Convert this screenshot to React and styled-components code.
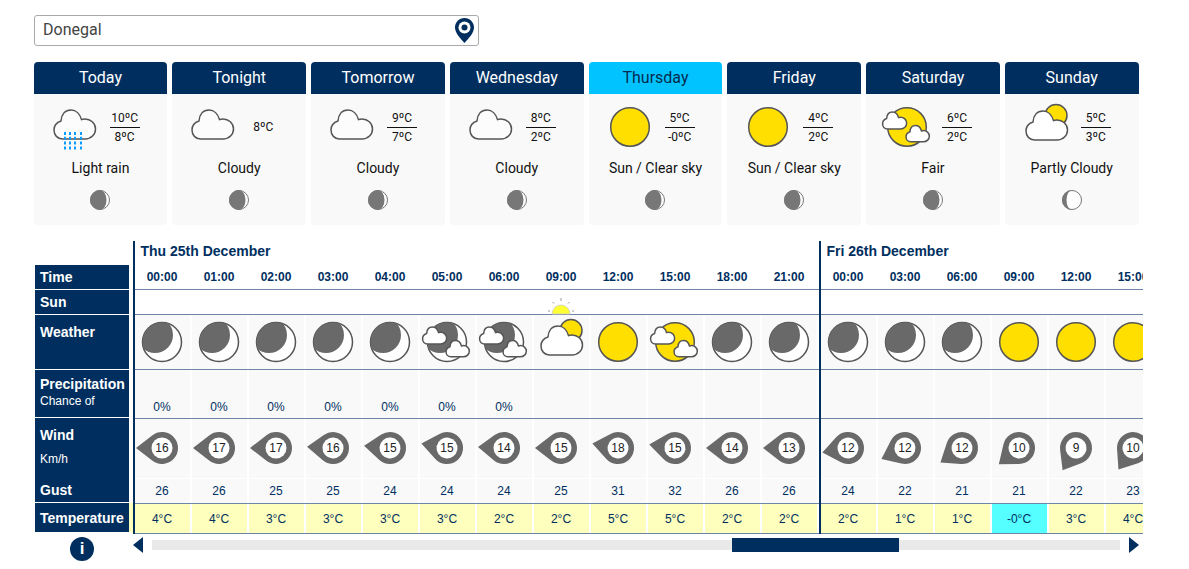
import React, { useId } from 'react';
import styled, { createGlobalStyle } from 'styled-components';

const NAVY = '#002f5f';
const LINE = '#6d86a8';
const STROKE = '#555';
const SUN = '#ffdf00';

const Global = createGlobalStyle`
  html, body { margin: 0; padding: 0; background: #fff; }
  * { box-sizing: border-box; }
`;

const Page = styled.div`
  width: 1189px;
  height: 569px;
  padding: 15px 0 0 34px;
  overflow: hidden;
  font-family: 'Liberation Sans', Arial, sans-serif;
`;

const Search = styled.div`
  width: 445px;
  height: 31px;
  border: 1px solid #aaa;
  border-radius: 3px;
  display: flex;
  align-items: center;
  justify-content: space-between;
  padding: 0 4px 2px 8px;
  font: 16px Roboto, sans-serif;
  color: #444;
`;

const SearchPin = styled.div`
  margin-bottom: -2px;
`;

const Days = styled.div`
  display: grid;
  grid-template-columns: repeat(8, 133.75px);
  column-gap: 5px;
  margin: 16px 0 0 -0.4px;
`;

const Card = styled.div`
  height: 163px;
  display: flex;
  flex-direction: column;
  background: #f9f9f9;
  border-radius: 4px;
  font-family: Roboto, sans-serif;
`;

const CardHead = styled.div`
  height: 32px;
  flex: none;
  display: flex;
  align-items: center;
  justify-content: center;
  padding-bottom: 2px;
  border-radius: 4px 4px 0 0;
  font-size: 16px;
  background: ${p => (p.$active ? '#00c3ff' : NAVY)};
  color: ${p => (p.$active ? '#062c4f' : '#fff')};
`;

const CardTop = styled.div`
  display: flex;
  align-items: center;
  height: 44px;
  margin-top: 11px;
  padding-left: 19px;
`;

const Temps = styled.div`
  width: 30px;
  margin-left: 13px;
  font-size: 12px;
  line-height: 18px;
  text-align: center;
  color: #111;
`;

const TempHigh = styled.div`
  border-bottom: 1px solid #111;
  height: 19px;
`;

const CardName = styled.div`
  margin-top: 10px;
  text-align: center;
  font-size: 14px;
  line-height: 18px;
  color: #111;
`;

const CardMoon = styled.div`
  margin-top: 13px;
  display: flex;
  justify-content: center;
`;

const Forecast = styled.div`
  display: flex;
  margin: 16px 0 0 1px;
`;

const Labels = styled.div`
  width: 98px;
  flex: none;
  padding-top: 24px;
`;

const Label = styled.div`
  height: ${p => p.$h}px;
  background: ${NAVY};
  background-clip: padding-box;
  border-right: 4px solid ${p => p.$tail || '#fff'};
  border-bottom: 1px solid #fff;
  padding: ${p => p.$pad ?? 0}px 0 0 5px;
  color: #fff;
  font-size: 14px;
  font-weight: 700;
  line-height: 16px;
`;

const LabelSub = styled.div`
  font-size: 12px;
  font-weight: 400;
  line-height: 14px;
  margin-top: ${p => p.$mt}px;
`;

const Gust = styled.div`
  margin-top: ${p => p.$mt}px;
`;

const Scroller = styled.div`
  width: 1010px;
  flex: none;
  overflow: hidden;
  display: flex;
`;

const DayBlock = styled.div`
  flex: none;
  border-left: 2px solid ${NAVY};
`;

const DateRow = styled.div`
  height: 24px;
  padding: 2px 0 0 5.5px;
  font-size: 14px;
  line-height: 16px;
  font-weight: 700;
  color: ${NAVY};
  white-space: nowrap;
`;

const Row = styled.div`
  display: flex;
  height: ${p => p.$h}px;
  border-bottom: ${p => (p.$plain ? '1px solid #fff' : `1px solid ${LINE}`)};
`;

const Cell = styled.div`
  width: 55px;
  margin-right: 2px;
  flex: none;
  display: flex;
  justify-content: center;
  align-items: ${p => p.$align || 'center'};
  padding: 0 1px ${p => p.$pb || 0}px 0;
  background: ${p => p.$bg || '#f9f9f9'};
  color: ${NAVY};
  font-size: 12px;
`;

const TimeCell = styled(Cell)`
  background: #fff;
  font-weight: 700;
`;

const SunCell = styled(Cell)`
  background: #fff;
  align-items: flex-end;
  overflow: visible;
`;

const Pin = styled.div`
  display: grid;
  place-items: center;
  width: 56px;
  height: 56px;
  flex: none;
  & > * { grid-area: 1 / 1; }
`;

const PinValue = styled.span`
  color: #222;
  font-size: 12px;
`;

const Foot = styled.div`
  display: flex;
  margin: 3px 0 0 1px;
`;

const InfoSlot = styled.div`
  width: 94px;
  flex: none;
  display: flex;
  justify-content: center;
`;

const Info = styled.div`
  width: 24px;
  height: 24px;
  border-radius: 50%;
  background: ${NAVY};
  color: #fff;
  font-size: 17px;
  font-weight: 700;
  line-height: 24px;
  text-align: center;
`;

const ScrollBar = styled.div`
  display: flex;
  align-items: flex-start;
  margin-left: 4px;
`;

const Track = styled.div`
  position: relative;
  width: 968px;
  height: 10px;
  margin: 3px 9px 0;
  background: #e9e9e9;
`;

const Thumb = styled.div`
  position: absolute;
  top: -2px;
  left: 580px;
  width: 167px;
  height: 14px;
  background: ${NAVY};
`;

const CLOUD = 'M9.5 30H32C38 30 42.5 25.5 42.5 20C42.5 14 37.5 10 32 10C30.5 10 29.5 10.2 28.5 10.6C27 5 23 1 18 1C12 1 8.5 5.5 8 12C3.5 13.5 1 17 1 21C1 26 4.5 30 9.5 30Z';

const Cloud = ({ x = 0, y = 0, s = 1, fill = '#fff', sw = 1.5 }) => (
  <path d={CLOUD} transform={`translate(${x} ${y}) scale(${s})`} fill={fill} stroke={STROKE} strokeWidth={sw} vectorEffect="non-scaling-stroke" strokeLinejoin="round" />
);

const Svg = styled.svg`
  display: block;
  flex: none;
  overflow: visible;
`;

const MoonDisc = () => {
  const id = useId();
  return (
    <>
      <clipPath id={id}><circle cx="22" cy="22" r="19.5" /></clipPath>
      <circle cx="22" cy="22" r="19.5" fill="#fff" stroke={STROKE} strokeWidth="1.5" />
      <circle cx="15" cy="15" r="18" fill="#696969" clipPath={`url(#${id})`} />
    </>
  );
};

const SunDisc = () => <circle cx="22" cy="22" r="19.3" fill={SUN} stroke={STROKE} strokeWidth="1.5" />;

const TwoClouds = () => (
  <>
    <Cloud x={-3} y={6.5} s={0.58} />
    <Cloud x={20.5} y={20} s={0.56} />
  </>
);

const WeatherIcon = ({ kind }) => (
  <Svg width="44" height="44" viewBox="0 0 44 44">
    {kind === 'moon' && <MoonDisc />}
    {kind === 'moonc' && <><MoonDisc /><TwoClouds /></>}
    {kind === 'sun' && <SunDisc />}
    {kind === 'fair' && <><SunDisc /><TwoClouds /></>}
    {kind === 'partly' && (
      <>
        <circle cx="32" cy="10.5" r="11" fill={SUN} stroke={STROKE} strokeWidth="1.5" />
        <Cloud x={1} y={5} />
      </>
    )}
    {kind === 'cloud' && <Cloud y={4} fill="#fcfcfc" />}
    {kind === 'rain' && (
      <>
        <Cloud y={4} fill="#fcfcfc" />
        <path d="M12 27V46M17 27V46M22 27V46M28 27V46" stroke="#0a9bff" strokeWidth="2" strokeDasharray="3 1.8" fill="none" />
      </>
    )}
  </Svg>
);

const MoonPhase = ({ thin }) => (
  <Svg width="20" height="20" viewBox="-10 -10 20 20">
    <circle r="9.5" fill="#fff" stroke="#777" strokeWidth="1" />
    <path d={thin ? 'M0-10A10 10 0 0 0 0 10A5.5 10 0 0 1 0-10Z' : 'M0-10A10 10 0 0 0 0 10A6.5 10 0 0 0 0-10Z'} fill="#777" />
  </Svg>
);

const WindPin = ({ angle, value }) => (
  <Pin>
    <Svg width="56" height="56" viewBox="-28 -28 56 56">
      <g transform={`rotate(${angle})`}>
        <path d="M0-26L12.6-9.85A16 16 0 1 1-12.6-9.85Z" fill="#696969" />
        <circle r="10.5" fill="#fff" />
      </g>
    </Svg>
    <PinValue>{value}</PinValue>
  </Pin>
);

const SunRise = () => (
  <Svg width="28" height="17" viewBox="0 0 28 17">
    <path d="M5 17A9 9 0 0 1 23 17Z" fill="#ffff33" stroke="#ccc" strokeWidth="0.8" />
    <path d="M14 1V4M5.5 5L7 6.5M22.5 5L21 6.5M1 14H3M25 14H27" stroke="#999" strokeWidth="1" fill="none" />
  </Svg>
);

const PinIcon = () => (
  <Svg width="19" height="25" viewBox="0 0 19 25">
    <path d="M9.5 0C4.2 0 0 4.2 0 9.5C0 15 5.5 20.5 9.5 25C13.5 20.5 19 15 19 9.5C19 4.2 14.8 0 9.5 0Z" fill={NAVY} />
    <circle cx="9.5" cy="9.5" r="6" fill="#fff" />
    <circle cx="9.5" cy="9.5" r="3" fill={NAVY} />
  </Svg>
);

const Arrow = ({ dir }) => (
  <Svg width="10" height="16" viewBox="0 0 10 16">
    <path d={dir === 'left' ? 'M0 8L10 0V16Z' : 'M10 8L0 0V16Z'} fill={NAVY} />
  </Svg>
);

const days = [
  { name: 'Today', icon: 'rain', hi: '10ºC', lo: '8ºC', text: 'Light rain' },
  { name: 'Tonight', icon: 'cloud', lo: '8ºC', text: 'Cloudy' },
  { name: 'Tomorrow', icon: 'cloud', hi: '9ºC', lo: '7ºC', text: 'Cloudy' },
  { name: 'Wednesday', icon: 'cloud', hi: '8ºC', lo: '2ºC', text: 'Cloudy' },
  { name: 'Thursday', icon: 'sun', hi: '5ºC', lo: '-0ºC', text: 'Sun / Clear sky', active: true },
  { name: 'Friday', icon: 'sun', hi: '4ºC', lo: '2ºC', text: 'Sun / Clear sky' },
  { name: 'Saturday', icon: 'fair', hi: '6ºC', lo: '2ºC', text: 'Fair' },
  { name: 'Sunday', icon: 'partly', hi: '5ºC', lo: '3ºC', text: 'Partly Cloudy', thin: true },
];

const h = (time, icon, rain, wind, angle, gust, temp, sunrise) => ({ time, icon, rain, wind, angle, gust, temp, sunrise });

const blocks = [
  {
    date: 'Thu 25th December',
    hours: [
      h('00:00', 'moon', '0%', 16, -90, 26, '4°C'),
      h('01:00', 'moon', '0%', 17, -90, 26, '4°C'),
      h('02:00', 'moon', '0%', 17, -90, 25, '3°C'),
      h('03:00', 'moon', '0%', 16, -87, 25, '3°C'),
      h('04:00', 'moon', '0%', 15, -85, 24, '3°C'),
      h('05:00', 'moonc', '0%', 15, -80, 24, '3°C'),
      h('06:00', 'moonc', '0%', 14, -88, 24, '2°C'),
      h('09:00', 'partly', '', 15, -90, 25, '2°C', true),
      h('12:00', 'sun', '', 18, -80, 31, '5°C'),
      h('15:00', 'fair', '', 15, -82, 32, '5°C'),
      h('18:00', 'moon', '', 14, -90, 26, '2°C'),
      h('21:00', 'moon', '', 13, -90, 26, '2°C'),
    ],
  },
  {
    date: 'Fri 26th December',
    hours: [
      h('00:00', 'moon', '', 12, -100, 24, '2°C'),
      h('03:00', 'moon', '', 12, -115, 22, '1°C'),
      h('06:00', 'moon', '', 12, -124, 21, '1°C'),
      h('09:00', 'sun', '', 10, -129, 21, '-0°C'),
      h('12:00', 'sun', '', 9, -149, 22, '3°C'),
      h('15:00', 'sun', '', 10, -146, 23, '4°C'),
    ],
  },
];

const TEMP_BG = '#ffffbd';

export default function App() {
  return (
    <Page>
      <Global />
      <Search>
        Donegal
        <SearchPin><PinIcon /></SearchPin>
      </Search>
      <Days>
        {days.map(d => (
          <Card key={d.name}>
            <CardHead $active={d.active}>{d.name}</CardHead>
            <CardTop>
              <WeatherIcon kind={d.icon} />
              <Temps>
                {d.hi && <TempHigh>{d.hi}</TempHigh>}
                <div>{d.lo}</div>
              </Temps>
            </CardTop>
            <CardName>{d.text}</CardName>
            <CardMoon><MoonPhase thin={d.thin} /></CardMoon>
          </Card>
        ))}
      </Days>
      <Forecast>
        <Labels>
          <Label $h={25} $pad={4}>Time</Label>
          <Label $h={25} $pad={4}>Sun</Label>
          <Label $h={55} $pad={9}>Weather</Label>
          <Label $h={48} $pad={6}>Precipitation<LabelSub $mt={2}>Chance of</LabelSub></Label>
          <Label $h={85} $pad={9}>
            Wind
            <LabelSub $mt={9}>Km/h</LabelSub>
            <Gust $mt={16}>Gust</Gust>
          </Label>
          <Label $h={30} $pad={7} $tail={TEMP_BG}>Temperature</Label>
        </Labels>
        <Scroller>
          {blocks.map(b => (
            <DayBlock key={b.date}>
              <DateRow>{b.date}</DateRow>
              <Row $h={25}>{b.hours.map(x => <TimeCell key={x.time}>{x.time}</TimeCell>)}</Row>
              <Row $h={25}>{b.hours.map(x => <SunCell key={x.time}>{x.sunrise && <SunRise />}</SunCell>)}</Row>
              <Row $h={55}>{b.hours.map(x => <Cell key={x.time}><WeatherIcon kind={x.icon} /></Cell>)}</Row>
              <Row $h={49}>{b.hours.map(x => <Cell key={x.time} $align="flex-end" $pb={4}>{x.rain}</Cell>)}</Row>
              <Row $h={60} $plain>{b.hours.map(x => <Cell key={x.time} $pb={1}><WindPin angle={x.angle} value={x.wind} /></Cell>)}</Row>
              <Row $h={25}>{b.hours.map(x => <Cell key={x.time}>{x.gust}</Cell>)}</Row>
              <Row $h={30}>{b.hours.map(x => <Cell key={x.time} $bg={x.temp === '-0°C' ? '#55ffff' : TEMP_BG}>{x.temp}</Cell>)}</Row>
            </DayBlock>
          ))}
        </Scroller>
      </Forecast>
      <Foot>
        <InfoSlot><Info>i</Info></InfoSlot>
        <ScrollBar>
          <Arrow dir="left" />
          <Track><Thumb /></Track>
          <Arrow dir="right" />
        </ScrollBar>
      </Foot>
    </Page>
  );
}
